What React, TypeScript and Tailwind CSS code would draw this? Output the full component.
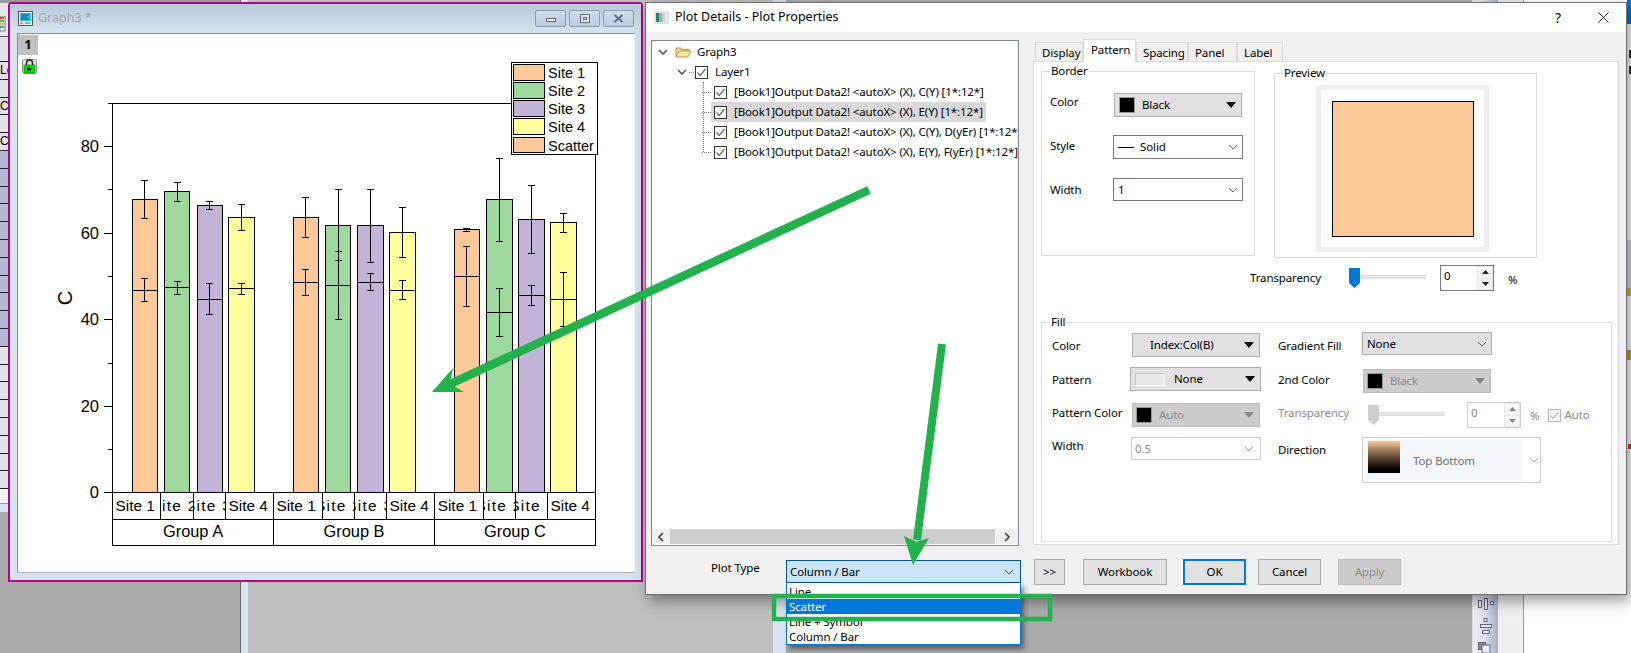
import React from "react";

const bars = [
  { x: 132, w: 25, top: 199, line: 290, c: "#fdc998", ex: 144, e1: [180, 218], e2: [278, 301] },
  { x: 164, w: 25, top: 191, line: 287, c: "#9fd89c", ex: 177, e1: [182, 201], e2: [281, 294] },
  { x: 197, w: 25, top: 205, line: 299, c: "#c2b3d8", ex: 209, e1: [201, 209], e2: [283, 314] },
  { x: 228, w: 26, top: 217, line: 288, c: "#ffff9e", ex: 241, e1: [204, 230], e2: [283, 294] },
  { x: 293, w: 25, top: 217, line: 282, c: "#fdc998", ex: 305, e1: [197, 237], e2: [269, 295] },
  { x: 325, w: 25, top: 225, line: 285, c: "#9fd89c", ex: 338, e1: [189, 260], e2: [251, 319] },
  { x: 357, w: 26, top: 225, line: 282, c: "#c2b3d8", ex: 370, e1: [189, 262], e2: [273, 290] },
  { x: 389, w: 26, top: 232, line: 290, c: "#ffff9e", ex: 402, e1: [207, 257], e2: [280, 299] },
  { x: 454, w: 25, top: 229, line: 276, c: "#fdc998", ex: 466, e1: [228, 231], e2: [246, 306] },
  { x: 486, w: 26, top: 199, line: 312, c: "#9fd89c", ex: 499, e1: [158, 241], e2: [288, 336] },
  { x: 518, w: 26, top: 219, line: 295, c: "#c2b3d8", ex: 531, e1: [185, 253], e2: [285, 305] },
  { x: 550, w: 26, top: 222, line: 299, c: "#ffff9e", ex: 563, e1: [213, 232], e2: [272, 326] },
];

// [left, right, label, page x where the text starts, letter spacing]
const cells = [
  [112, 160, "Site 1", 115.5, 0], [160, 193, "Site 2", 150.4, 1.3], [193, 225, "Site 3", 184.9, 1.3], [225, 273, "Site 4", 228.5, 0],
  [273, 322, "Site 1", 276.4, 0], [322, 354, "Site 2", 315, 1.3], [354, 386, "Site 3", 346.2, 1.3], [386, 434, "Site 4", 389.5, 0],
  [434, 483, "Site 1", 437.7, 0], [483, 515, "Site 2", 475.4, 1.3], [515, 547, "Site 3", 509.2, 1.3], [547, 595, "Site 4", 550.5, 0],
] as [number, number, string, number, number][];

const legend = [
  { y: 64, h: 16, c: "#fdc998", t: "Site 1" },
  { y: 82, h: 16, c: "#9fd89c", t: "Site 2" },
  { y: 100, h: 16, c: "#c2b3d8", t: "Site 3" },
  { y: 118, h: 16, c: "#ffff9e", t: "Site 4" },
  { y: 137, h: 15, c: "#fdc998", t: "Scatter" },
];

function Chart() {
  const arial = "'Liberation Sans', Arial, sans-serif";
  const majors = [[146, "80"], [233, "60"], [319, "40"], [406, "20"], [492, "0"]] as [number, string][];
  const minors = [103, 189, 276, 363, 449];
  const Err = ({ x, a, b }: { x: number; a: number; b: number }) => (
    <g>
      <line x1={x + 0.5} x2={x + 0.5} y1={a} y2={b} />
      <line x1={x - 3} x2={x + 4} y1={a + 0.5} y2={a + 0.5} />
      <line x1={x - 3} x2={x + 4} y1={b + 0.5} y2={b + 0.5} />
    </g>
  );
  return (
    <svg viewBox="18 34 617 538" width={617} height={538} className="block" style={{ fontFamily: arial }}>
      <g stroke="#000" strokeWidth={1} shapeRendering="crispEdges">
        {bars.map((b, i) => (
          <g key={i}>
            <rect x={b.x + 0.5} y={b.top + 0.5} width={b.w} height={492 - b.top} fill={b.c} />
            <line x1={b.x} x2={b.x + b.w + 1} y1={b.line + 0.5} y2={b.line + 0.5} />
            <Err x={b.ex} a={b.e1[0]} b={b.e1[1]} />
            <Err x={b.ex} a={b.e2[0]} b={b.e2[1]} />
          </g>
        ))}
        <line x1={112.5} x2={112.5} y1={103} y2={546} />
        <line x1={108} x2={511} y1={103.5} y2={103.5} />
        <line x1={595.5} x2={595.5} y1={150} y2={546} />
        <line x1={104} x2={596} y1={492.5} y2={492.5} />
        <line x1={112} x2={596} y1={519.5} y2={519.5} />
        <line x1={112} x2={596} y1={545.5} y2={545.5} />
        {majors.map(([y]) => <line key={y} x1={104} x2={112} y1={y + 0.5} y2={y + 0.5} />)}
        {minors.map((y) => <line key={y} x1={108} x2={112} y1={y + 0.5} y2={y + 0.5} />)}
        {cells.map(([a], i) => i > 0 && <line key={i} x1={a + 0.5} x2={a + 0.5} y1={492} y2={i % 4 === 0 ? 546 : 520} />)}
      </g>
      {majors.map(([y, t]) => <text key={t} x={99} y={y + 6} textAnchor="end" fontSize={16.5} fill="#000">{t}</text>)}
      <text transform="rotate(-90 71.5 298)" x={71.5} y={298} textAnchor="middle" fontSize={20} fill="#000">C</text>
      {cells.map(([a, b, t, sx, ls], i) => (
        <svg key={i} x={a + 1} y={493} width={b - a - 1} height={26}>
          <text x={sx - a - 1} y={18} letterSpacing={ls} fontSize={15.4} fill="#000">{t}</text>
        </svg>
      ))}
      <text x={193} y={537} textAnchor="middle" fontSize={16.4} fill="#000">Group A</text>
      <text x={354} y={537} textAnchor="middle" fontSize={16.4} fill="#000">Group B</text>
      <text x={515} y={537} textAnchor="middle" fontSize={16.4} fill="#000">Group C</text>
      <rect x={511.5} y={62.5} width={86} height={92} fill="#fff" stroke="#000" shapeRendering="crispEdges" />
      {legend.map((l) => (
        <g key={l.t}>
          <rect x={513.5} y={l.y + 0.5} width={31} height={l.h} fill={l.c} stroke="#000" shapeRendering="crispEdges" />
          <text x={548} y={l.y + 13.5} fontSize={14.5} fill="#000">{l.t}</text>
        </g>
      ))}
    </svg>
  );
}

function WinBtn({ children }: { children: React.ReactNode }) {
  return (
    <div className="w-[31px] h-[17px] rounded-[2px] border border-[#8a9bb5] bg-gradient-to-b from-[#d3deeb] to-[#bccadc] flex items-center justify-center">
      {children}
    </div>
  );
}

function GraphWindow() {
  return (
    <div className="absolute left-[8px] top-[2px] w-[635px] h-[580px] border-2 border-[#b6008c] rounded-tl-[4px] rounded-tr-[4px] bg-[#d7e3f0] flex flex-col">
      <div className="h-[29px] shrink-0 bg-gradient-to-b from-[#b9c8d9] to-[#d7e3f0] flex items-center pl-[8px] pr-[7px]">
        <svg width={15} height={15} viewBox="0 0 15 15" className="shrink-0">
          <rect x={0.5} y={0.5} width={14} height={14} fill="#e8f4f4" stroke="#555" />
          <rect x={2} y={2} width={11} height={8} fill="#20c8d8" />
          <path d="M3 4h8M3 6h6M3 8h8" stroke="#204080" strokeWidth={1} />
          <path d="M2 12h3" stroke="#e02020" />
          <path d="M7 12h5" stroke="#208040" />
        </svg>
        <span className="ml-[5px] text-[12.5px] text-[#a0a4a8]">Graph3 *</span>
        <div className="ml-auto flex gap-[3px]">
          <WinBtn><span className="block w-[10px] h-[4px] border border-[#5c6a7c] bg-[#eef2f6] mt-[3px]" /></WinBtn>
          <WinBtn><span className="block w-[10px] h-[9px] border border-[#5c6a7c] bg-[#e2e8ef] flex items-center justify-center"><span className="block w-[4px] h-[3px] border border-[#5c6a7c]" /></span></WinBtn>
          <WinBtn>
            <svg width={11} height={9} viewBox="0 0 11 9"><path d="M1.5 1L9.5 8M9.5 1L1.5 8" stroke="#5c6a7c" strokeWidth={2} /></svg>
          </WinBtn>
        </div>
      </div>
      <div className="relative ml-[7px] w-[618px] h-[540px] border-l border-t border-[#8a8a8a] border-b-[#b5b5b5] border-b bg-white overflow-hidden">
        <Chart />
        <div className="absolute left-0 top-[1px] w-[20px] h-[20px] bg-[#c0c0c0] flex items-center justify-center text-[13px] font-bold text-black">1</div>
        <svg className="absolute left-[4px] top-[25px]" width={15} height={15} viewBox="0 0 15 15">
          <rect x={0.5} y={0.5} width={14} height={14} rx={2} fill="#e0e0e0" stroke="#8a8a8a" />
          <rect x={2} y={6} width={11} height={8} fill="#00e000" stroke="#006000" strokeWidth={0.5} />
          <path d="M4.5 6V4a3 3 0 016 0v2" fill="none" stroke="#222" strokeWidth={1.4} />
          <path d="M5 7.5L10 10L5 12.5z" fill="#111" />
        </svg>
      </div>
    </div>
  );
}

function Worksheet() {
  const row = "h-[17.8px] shrink-0 border-b border-[#222] overflow-hidden text-[12px] leading-[17px]";
  return (
    <div className="flex flex-col font-['Liberation_Sans',sans-serif] text-black">
      <div className="h-[3px] bg-[#999999]" />
      <div className="h-[34px] bg-[#e6e6ea] border-b border-[#555] pt-[13px]">
        <svg width={6} height={16} viewBox="0 0 6 16" className="block">
          <rect x={0} y={0} width={5} height={15} fill="#e8f4e8" stroke="#333" strokeWidth={0.6} />
          <path d="M0 2h4" stroke="#e04040" strokeWidth={2} />
          <path d="M0 5h4" stroke="#40c040" strokeWidth={2} />
          <path d="M0 8h4" stroke="#e0c040" strokeWidth={2} />
          <path d="M0 11h4" stroke="#40a0e0" strokeWidth={2} />
        </svg>
      </div>
      <div className="h-[25px] bg-[#e0e0e6] border-b border-[#222]" />
      <div className={`${row} bg-[#e0e0e6]`}>Lo</div>
      <div className={`${row} bg-[#e0e0e6]`} />
      <div className={`${row} bg-[#e0e0e6]`}>C</div>
      <div className={`${row} bg-[#e0e0e6]`} />
      <div className={`${row} bg-[#e0e0e6]`}>C</div>
      {Array.from({ length: 11 }).map((_, i) => <div key={i} className={`${row} bg-[#b4b8d0]`} />)}
      {Array.from({ length: 8 }).map((_, i) => <div key={i} className={`${row} bg-[#e0e0e6]`} />)}
      <div className="h-[15px] bg-[#f0f0f0] border-b border-[#999]" />
      <div className="h-[8px] bg-[#d7e3f0]" />
    </div>
  );
}

const Check = ({ gray = false }: { gray?: boolean }) => (
  <svg width={13} height={13} viewBox="0 0 13 13" className="shrink-0">
    <rect x={0.5} y={0.5} width={12} height={12} fill={gray ? "#f5f5f5" : "#fff"} stroke={gray ? "#b5b5b5" : "#333"} />
    <path d="M2.5 6.5L5.2 9.5L10.5 3" fill="none" stroke={gray ? "#c0c0c0" : "#666"} strokeWidth={1.2} />
  </svg>
);

const Expand = () => (
  <svg width={10} height={6} viewBox="0 0 10 6" className="shrink-0"><path d="M1 1L5 5L9 1" fill="none" stroke="#555" strokeWidth={1.6} /></svg>
);

function Tree() {
  const rows = [
    "[Book1]Output Data2! <autoX> (X), C(Y) [1*:12*]",
    "[Book1]Output Data2! <autoX> (X), E(Y) [1*:12*]",
    "[Book1]Output Data2! <autoX> (X), C(Y), D(yEr) [1*:12*]",
    "[Book1]Output Data2! <autoX> (X), E(Y), F(yEr) [1*:12*]",
  ];
  return (
    <div className="relative w-[368px] h-[506px] bg-white border border-[#828790] flex flex-col overflow-hidden shrink-0">
      <div className="flex-1 pt-[1px] flex flex-col whitespace-nowrap overflow-hidden">
        <div className="h-[20px] flex items-center pl-[6px] shrink-0">
          <Expand />
          <svg width={17} height={12} viewBox="0 0 17 12" className="ml-[7px] shrink-0">
            <path d="M1 11V2h5l1 1.5h7V6" fill="#f4d488" stroke="#b59a50" />
            <path d="M1 11L4 5h12l-3 6z" fill="#fbe6a6" stroke="#b59a50" />
          </svg>
          <span className="ml-[5px]">Graph3</span>
        </div>
        <div className="h-[20px] flex items-center pl-[25px] shrink-0">
          <Expand />
          <span className="block w-[5px] ml-[2px] mr-[1px] border-t border-dotted border-[#888] shrink-0" />
          <Check />
          <span className="ml-[7px]">Layer1</span>
        </div>
        {rows.map((t, i) => (
          <div key={t} className="h-[20px] flex items-center pl-[50px] shrink-0">
            <span className="block w-[9px] border-t border-dotted border-[#777] shrink-0" />
            <div className={`h-[20px] flex items-center pl-[3px] pr-[3px] shrink-0 ${i === 1 ? "bg-[#d9d9d9]" : ""}`}>
              <Check />
              <span className="ml-[7px]">{t}</span>
            </div>
          </div>
        ))}
      </div>
      <span className="absolute left-[51px] top-[41px] h-[70px] border-l border-dotted border-[#777]" />
      <div className="h-[15px] mb-[1px] flex items-center bg-[#f0f0f0] shrink-0">
        <div className="w-[18px] flex justify-center">
          <svg width={6} height={10} viewBox="0 0 6 10"><path d="M5 1L1 5L5 9" fill="none" stroke="#444" strokeWidth={1.6} /></svg>
        </div>
        <div className="flex-1 h-full bg-[#cdcdcd]" />
        <div className="w-[23px] flex justify-center">
          <svg width={6} height={10} viewBox="0 0 6 10"><path d="M1 1L5 5L1 9" fill="none" stroke="#444" strokeWidth={1.6} /></svg>
        </div>
      </div>
    </div>
  );
}

const Caret = ({ c = "#000" }: { c?: string }) => (
  <svg width={10} height={6} viewBox="0 0 10 6" className="shrink-0"><path d="M0 0H10L5 6z" fill={c} /></svg>
);
const Chev = ({ c = "#666" }: { c?: string }) => (
  <svg width={10} height={6} viewBox="0 0 10 6" className="shrink-0"><path d="M1 1L5 5L9 1" fill="none" stroke={c} strokeWidth={1} /></svg>
);
const Swatch = () => <span className="block w-[16px] h-[16px] bg-black border border-[#999] shrink-0" />;

function Group({ label, className, children }: { label: string; className: string; children: React.ReactNode }) {
  return (
    <div className={`relative border border-[#d9d9d9] shrink-0 ${className}`}>
      <span className="absolute left-[8px] -top-[10px] px-[1px] bg-white leading-[18px]">{label}</span>
      {children}
    </div>
  );
}

function Slider({ className, on = true }: { className: string; on?: boolean }) {
  return (
    <div className={`flex items-center shrink-0 ${className}`}>
      <svg width={11} height={20} viewBox="0 0 11 20" className="shrink-0">
        <path d="M0 0H11V15L5.5 20L0 15z" fill={on ? "#0078d7" : "#cdcdcd"} />
      </svg>
      <span className="block flex-1 h-[4px] mb-[3px] bg-[#e7e7e7] border border-[#dcdcdc]" />
    </div>
  );
}

function Spin({ on = true }: { on?: boolean }) {
  return (
    <div className={`w-[54px] h-[26px] shrink-0 flex border ${on ? "border-[#7a7a7a] text-black" : "border-[#ccc] text-[#888]"} bg-white`}>
      <span className="flex-1 pl-[3px] leading-[20px]">0</span>
      <div className="w-[16px] bg-[#e8e8e8] flex flex-col items-center gap-[1px] p-[1px]">
        <span className="flex-1 w-full bg-[#f5f5f5] flex items-center justify-center">
          <svg width={7} height={4} viewBox="0 0 7 4"><path d="M0 4H7L3.5 0z" fill={on ? "#222" : "#888"} /></svg>
        </span>
        <span className="flex-1 w-full bg-[#f5f5f5] flex items-center justify-center">
          <svg width={7} height={4} viewBox="0 0 7 4"><path d="M0 0H7L3.5 4z" fill={on ? "#222" : "#888"} /></svg>
        </span>
      </div>
    </div>
  );
}

const dropOn = "bg-[#e1e1e1] border border-[#adadad] flex items-center shrink-0";
const dropOff = "bg-[#cccccc] border border-[#bdbdbd] flex items-center shrink-0 text-[#888888]";
const comboOn = "bg-white border border-[#7a7a7a] flex items-center shrink-0";

function TabPanel() {
  return (
    <div className="w-[586px] h-[484px] bg-white border border-[#d9d9d9] flex flex-col pl-[7px]">
      <div className="flex items-start pt-[9px] shrink-0">
        <Group label="Border" className="w-[214px] h-[185px] pt-[21px] pl-[8px]">
          <div className="flex items-center h-[23px]">
            <span className="w-[64px] mb-[6px]">Color</span>
            <div className={`${dropOn} w-[128px] h-[24px] pl-[4px] pr-[5px]`}>
              <Swatch /><span className="ml-[7px]">Black</span><span className="ml-auto"><Caret /></span>
            </div>
          </div>
          <div className="flex items-center h-[24px] mt-[19px]">
            <span className="w-[63px] mb-[2px]">Style</span>
            <div className={`${comboOn} w-[130px] h-[24px] pl-[4px] pr-[4px]`}>
              <span className="block w-[16px] border-t border-black" /><span className="ml-[6px]">Solid</span><span className="ml-auto"><Chev /></span>
            </div>
          </div>
          <div className="flex items-center h-[23px] mt-[19px]">
            <span className="w-[63px]">Width</span>
            <div className={`${comboOn} w-[130px] h-[23px] pl-[4px] pr-[4px]`}>
              <span>1</span><span className="ml-auto"><Chev /></span>
            </div>
          </div>
        </Group>
        <Group label="Preview" className="w-[263px] h-[185px] ml-[19px] mt-[2px] pt-[11px] pl-[41px]">
          <div className="w-[173px] h-[167px] border-[5px] border-[#efefef] pt-[11px] pl-[11px] bg-white">
            <div className="w-[142px] h-[136px] bg-[#fdc998] border border-black" />
          </div>
        </Group>
      </div>
      <div className="flex items-center mt-[7px] ml-[209px] h-[26px] shrink-0">
        <span className="w-[99px]">Transparency</span>
        <Slider className="w-[77px]" />
        <span className="ml-[14px]"><Spin /></span>
        <span className="ml-[14px] mt-[4px]">%</span>
      </div>
      <Group label="Fill" className="w-[571px] h-[220px] mt-[31px] flex">
        <div className="w-[236px] pl-[10px] pt-[10px] shrink-0 flex flex-col">
          <div className="flex items-center h-[23px]">
            <span className="w-[80px] mt-[3px]">Color</span>
            <div className={`${dropOn} w-[128px] h-[24px] pr-[5px]`}>
              <span className="ml-[17px]">Index:Col(B)</span><span className="ml-auto"><Caret /></span>
            </div>
          </div>
          <div className="flex items-center h-[24px] mt-[11px]">
            <span className="w-[78px] mt-[2px]">Pattern</span>
            <div className={`${dropOn} w-[131px] h-[24px] pl-[4px] pr-[5px]`}>
              <span className="block w-[30px] h-[13px] border border-[#c4c4c4] bg-[#eaeaea] border-b-white border-r-white" /><span className="ml-[9px]">None</span><span className="ml-auto"><Caret /></span>
            </div>
          </div>
          <div className="flex items-center h-[24px] mt-[12px]">
            <span className="w-[80px] mb-[4px] whitespace-nowrap">Pattern Color</span>
            <div className={`${dropOff} w-[128px] h-[24px] pl-[3px] pr-[5px]`}>
              <Swatch /><span className="ml-[7px]">Auto</span><span className="ml-auto"><Caret c="#888" /></span>
            </div>
          </div>
          <div className="flex items-center h-[23px] mt-[10px]">
            <span className="w-[79px] mb-[6px]">Width</span>
            <div className="bg-white border border-[#cccccc] flex items-center w-[130px] h-[23px] pl-[3px] pr-[6px] text-[#888888]">
              <span>0.5</span><span className="ml-auto"><Chev c="#aaa" /></span>
            </div>
          </div>
        </div>
        <div className="flex-1 pt-[9px] flex flex-col">
          <div className="flex items-center h-[23px]">
            <span className="w-[84px] mt-[4px]">Gradient Fill</span>
            <div className={`${dropOn} w-[130px] h-[23px] pl-[4px] pr-[4px]`}>
              <span>None</span><span className="ml-auto"><Chev /></span>
            </div>
          </div>
          <div className="flex items-center h-[24px] mt-[14px]">
            <span className="w-[85px] mb-[2px]">2nd Color</span>
            <div className={`${dropOff} w-[128px] h-[24px] pl-[3px] pr-[5px]`}>
              <Swatch /><span className="ml-[7px]">Black</span><span className="ml-auto"><Caret c="#888" /></span>
            </div>
          </div>
          <div className="flex items-center h-[26px] mt-[9px] text-[#8a8a8a]">
            <span className="w-[90px] mb-[4px]">Transparency</span>
            <Slider className="w-[76px]" on={false} />
            <span className="ml-[23px]"><Spin on={false} /></span>
            <span className="ml-[9px] mt-[2px]">%</span>
            <span className="ml-[9px]"><Check gray /></span>
            <span className="ml-[3px]">Auto</span>
          </div>
          <div className="flex items-start h-[46px] mt-[9px]">
            <span className="w-[84px] mt-[4px]">Direction</span>
            <div className="w-[179px] h-[46px] bg-white border border-[#cccccc] flex items-center pl-[2px]">
              <div className="w-[157px] h-[41px] bg-[#f3f7fb] flex pl-[3px] pt-[1px]">
                <div className="w-[32px] h-[32px] bg-gradient-to-b from-[#fdc998] to-black shrink-0" />
                <span className="ml-[13px] mt-[11px] text-[#6e6e6e]">Top Bottom</span>
              </div>
              <span className="ml-[7px]"><Chev c="#aaa" /></span>
            </div>
          </div>
        </div>
      </Group>
    </div>
  );
}

function Tabs() {
  const t = "h-[20px] border border-b-0 border-[#d9d9d9] flex items-center pl-[6px]";
  return (
    <div className="flex items-end h-[22px] pl-[2px] -mb-[1px] relative">
      <div className={`${t} w-[48px]`}>Display</div>
      <div className="h-[23px] w-[53px] bg-white border border-b-0 border-[#d9d9d9] flex items-center pl-[7px] pb-[3px]">Pattern</div>
      <div className={`${t} w-[52px]`}>Spacing</div>
      <div className={`${t} w-[49px]`}>Panel</div>
      <div className={`${t} w-[46px]`}>Label</div>
    </div>
  );
}

function Btn({ className, children }: { className: string; children: React.ReactNode }) {
  return <div className={`h-[26px] flex items-center justify-center shrink-0 ${className}`}>{children}</div>;
}

function Dialog() {
  return (
    <div className="absolute left-[645px] top-[2px] w-[982px] h-[593px] bg-[#f0f0f0] border border-[#6e6e6e] flex flex-col shadow-[4px_6px_14px_rgba(0,0,0,0.4)] font-['Noto_Sans',sans-serif] text-[11.5px] tracking-[-0.12px] text-black">
      <div className="h-[29px] shrink-0 bg-white flex items-center pl-[8px] pr-[17px] text-[12.5px] tracking-normal">
        <svg width={15} height={13} viewBox="0 0 15 13" className="shrink-0">
          <rect x={0} y={0} width={15} height={13} fill="#dfe3e6" />
          <rect x={2} y={2} width={3} height={9} fill="#2e7d6a" />
          <rect x={5} y={2} width={3} height={9} fill="#7db8c8" />
          <rect x={8} y={2} width={3} height={9} fill="#c8ccd0" />
          <rect x={11} y={2} width={2} height={9} fill="#f0f0f0" />
        </svg>
        <span className="ml-[6px]">Plot Details - Plot Properties</span>
        <span className="ml-auto mr-[37px] text-[14px]">?</span>
        <svg width={11} height={11} viewBox="0 0 11 11"><path d="M0.5 0.5L10.5 10.5M10.5 0.5L0.5 10.5" stroke="#222" strokeWidth={1} /></svg>
      </div>
      <div className="flex pl-[5px] pt-[8px] shrink-0">
        <Tree />
        <div className="ml-[14px] flex flex-col">
          <Tabs />
          <TabPanel />
        </div>
      </div>
      <div className="relative flex items-start pt-[14px] shrink-0">
        <span className="ml-[65px] w-[75px] leading-[18px] -mt-[1px]">Plot Type</span>
        <div className="w-[235px] h-[23px] bg-[#cce4f7] border border-[#005499] flex items-center pl-[3px] pr-[6px] shrink-0">
          <span>Column / Bar</span><span className="ml-auto"><Chev c="#555" /></span>
        </div>
        <Btn className="ml-[13px] w-[31px] bg-[#e1e1e1] border border-[#adadad] -mt-[1px]">&gt;&gt;</Btn>
        <Btn className="ml-[18px] w-[84px] bg-[#e1e1e1] border border-[#adadad] -mt-[1px]">Workbook</Btn>
        <Btn className="ml-[16px] w-[63px] bg-[#e1e1e1] border-2 border-[#0078d7] -mt-[1px]">OK</Btn>
        <Btn className="ml-[12px] w-[63px] bg-[#e1e1e1] border border-[#adadad] -mt-[1px]">Cancel</Btn>
        <Btn className="ml-[17px] w-[63px] bg-[#cccccc] border border-[#bfbfbf] text-[#8a8a8a] -mt-[1px]">Apply</Btn>
        <div className="absolute left-[140px] top-[37px] w-[235px] h-[62px] pt-[1px] bg-white border border-t-0 border-[#0078d7] shadow-[3px_4px_5px_rgba(0,0,0,0.45)] flex flex-col leading-[15px]">
          <div className="h-[15px] pl-[2px]">Line</div>
          <div className="h-[15px] pl-[2px] bg-[#0078d7] text-white">Scatter</div>
          <div className="h-[15px] pl-[2px]">Line + Symbol</div>
          <div className="h-[15px] pl-[2px]">Column / Bar</div>
        </div>
      </div>
    </div>
  );
}

function Annotations() {
  const green = "#22b14c";
  return (
    <svg className="absolute left-0 top-0 pointer-events-none" width={1631} height={653} viewBox="0 0 1631 653">
      <line x1={869} y1={190} x2={450} y2={384} stroke={green} strokeWidth={8.5} />
      <path d="M432 392L453 368L450 384L464 392z" fill={green} />
      <line x1={942} y1={344} x2={917} y2={540} stroke={green} strokeWidth={8} />
      <path d="M913 565L904 536L916.5 542L929 538z" fill={green} />
      <rect x={774} y={596} width={276} height={23} fill="none" stroke={green} strokeWidth={4.5} />
    </svg>
  );
}

export default function App() {
  return (
    <div className="relative w-[1631px] h-[653px] overflow-hidden flex bg-[#aaaaaa] font-['Noto_Sans',sans-serif]">
      <div className="w-[240px] shrink-0 bg-[#aaaaaa]"><Worksheet /></div>
      <div className="w-[8px] shrink-0 bg-[#d7e3f0] border-l border-[#666666]" />
      <div className="w-[525px] shrink-0 bg-[#bfbfbf]" />
      <div className="w-[13px] shrink-0 bg-[#d7e3f0]" />
      <div className="w-[686px] shrink-0 bg-[#aaaaaa]" />
      <div className="w-[26px] shrink-0 bg-gradient-to-r from-[#eef0f8] via-[#dcdeea] to-[#a9adc4] flex flex-col items-center justify-end gap-[8px] border-l border-[#dddddd]">
        <svg width={16} height={12} viewBox="0 0 16 12">
          <rect x={0.5} y={2.5} width={3} height={7} fill="#eef" stroke="#667" />
          <rect x={6.5} y={0.5} width={3} height={11} fill="#eef" stroke="#667" />
          <rect x={12.5} y={3.5} width={3} height={3} fill="#eef" stroke="#667" />
        </svg>
        <svg width={12} height={16} viewBox="0 0 12 16">
          <rect x={4} y={0.5} width={3} height={3} fill="#eef" stroke="#667" />
          <rect x={0.5} y={6.5} width={11} height={3} fill="#eef" stroke="#667" />
          <rect x={2.5} y={12.5} width={7} height={3} fill="#eef" stroke="#667" />
        </svg>
        <svg width={15} height={13} viewBox="0 0 15 13" className="-mb-[2px]">
          <rect x={0.5} y={0.5} width={7} height={7} fill="#8a8d9e" stroke="#667" />
          <rect x={4} y={3} width={8} height={8} fill="#eef" stroke="#667" />
        </svg>
      </div>
      <div className="w-[26px] shrink-0 bg-[#efefef] border-r border-[#999999]" />
      <div className="flex-1 bg-white flex flex-col items-end">
        <div className="w-[4px] h-[24px] bg-[#0078d7]" />
        <div className="w-[2px] h-[8px] mt-[26px] bg-[#333333]" />
        <div className="w-[2px] h-[8px] mt-[8px] bg-[#333333]" />
        <div className="w-[4px] h-[48px] mt-[166px] bg-[#d4d6e0]" />
        <div className="w-[4px] h-[8px] bg-[#e0b030]" />
        <div className="w-[4px] h-[10px] mt-[54px] bg-[#c8a030]" />
        <div className="w-[3px] h-[5px] mt-[84px] bg-[#cc3322]" />
      </div>
      <div className="absolute left-0 top-0 w-[1631px] h-[653px]">
        <GraphWindow />
        <Dialog />
        <Annotations />
      </div>
    </div>
  );
}
